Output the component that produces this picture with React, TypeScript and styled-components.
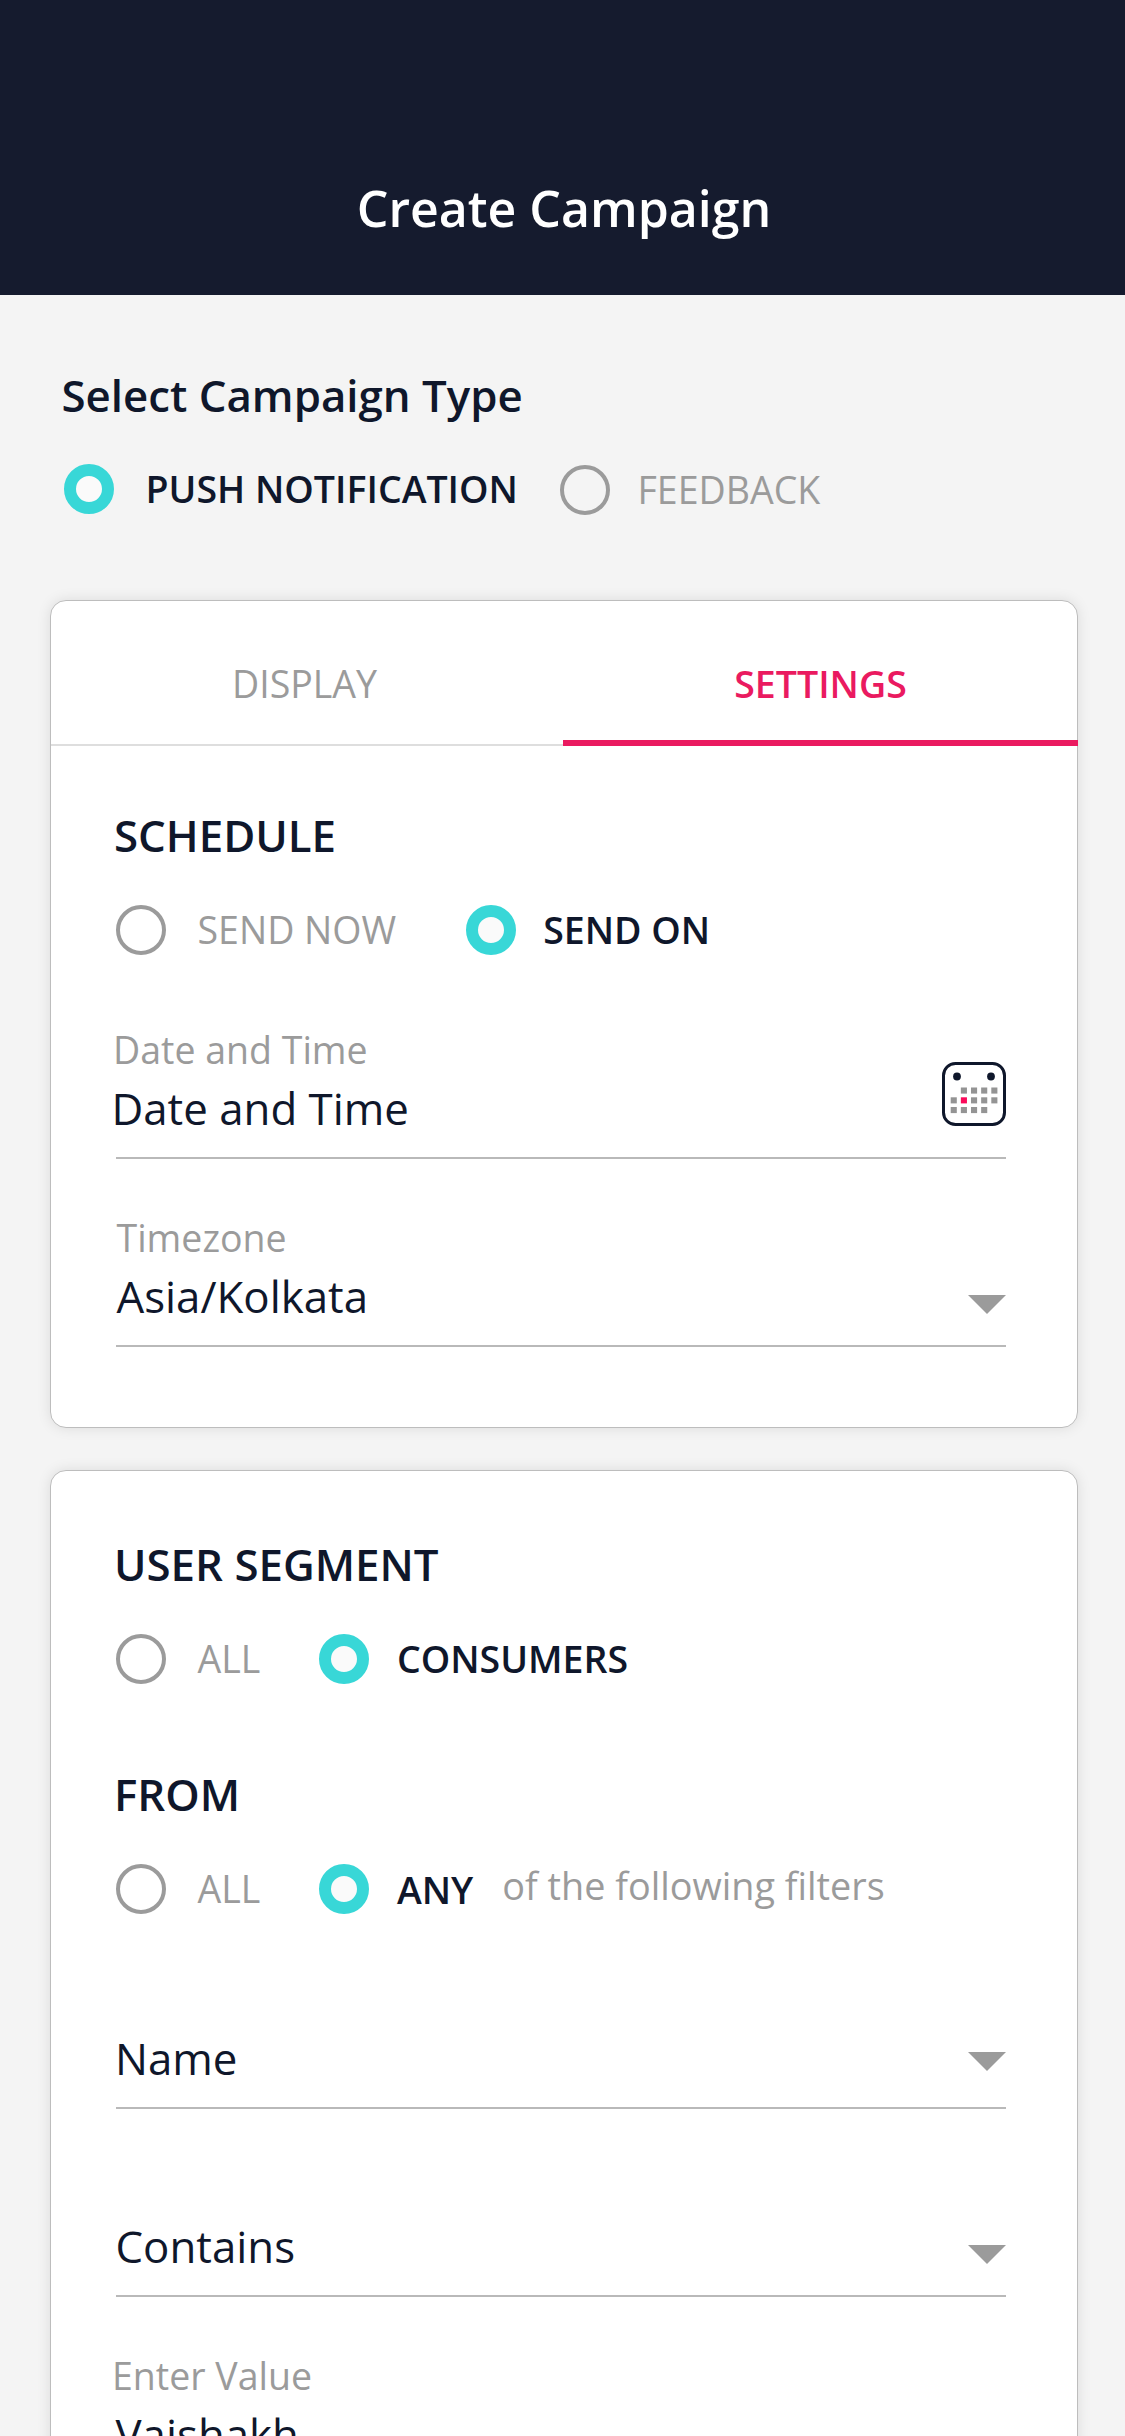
import React from 'react';
import styled, { createGlobalStyle } from 'styled-components';

const color = {
  navy: '#151b2e',
  ink: '#0f172b',
  muted: '#9b9b9b',
  teal: '#38d7d7',
  pink: '#ea1a60',
  page: '#f4f4f4',
  rule: '#b9b9b9',
};

const Global = createGlobalStyle`
  * { box-sizing: border-box; }
  body {
    margin: 0;
    background: ${color.page};
    color: ${color.ink};
    font-family: 'Open Sans', sans-serif;
  }
`;

const Screen = styled.div`
  width: 1125px;
  height: 2436px;
  overflow: hidden;
  background: ${color.page};
`;

const Header = styled.header`
  height: 295px;
  padding: 172px 0 0 3px;
  background: ${color.navy};
  color: #fff;
  text-align: center;
  font-size: 50px;
  line-height: 72px;
  font-weight: 600;
`;

const TypeSection = styled.section`
  padding: 70px 0 0 64px;
  height: 305px;
`;

const Title = styled.h2`
  margin: 0 0 40px -2px;
  font-size: 43.8px;
  line-height: 60px;
  font-weight: 600;
`;

const TypeTitle = styled(Title)`
  margin-bottom: 39px;
  margin-left: -2.5px;
`;

const OptionRow = styled.div<{ $gap: number }>`
  display: flex;
  align-items: center;
  height: 50px;
  column-gap: ${(p) => p.$gap}px;
`;

const OptionBox = styled.label<{ $gap: number; $drop?: number }>`
  display: flex;
  align-items: center;
  column-gap: ${(p) => p.$gap}px;
  padding-top: ${(p) => p.$drop ?? 0}px;
`;

const Ring = styled.span<{ $on?: boolean }>`
  flex: none;
  width: 50px;
  height: 50px;
  border-radius: 50%;
  border: ${(p) => (p.$on ? `12px solid ${color.teal}` : `4px solid ${color.muted}`)};
  background: ${(p) => (p.$on ? '#fafafa' : 'transparent')};
`;

const OptionText = styled.span<{ $on?: boolean; $drop?: number }>`
  font-size: 37.5px;
  line-height: 50px;
  font-weight: ${(p) => (p.$on ? 600 : 400)};
  color: ${(p) => (p.$on ? color.ink : color.muted)};
  padding-top: ${(p) => p.$drop ?? 0}px;
  white-space: nowrap;
`;

const Suffix = styled(OptionText)`
  margin-left: -30px;
  padding-bottom: 6px;
  font-size: 37.8px;
`;

const Cards = styled.main`
  display: flex;
  flex-direction: column;
  gap: 42px;
  padding: 0 47px 0 50px;
`;

const Card = styled.section`
  background: #fff;
  border: 1px solid #bdbdbd;
  border-radius: 16px;
  box-shadow: 0 0 14px rgba(0, 0, 0, 0.1);
`;

const Tabs = styled.nav`
  display: grid;
  grid-template-columns: 512px 515px;
  height: 145px;
  margin-right: -1px;
`;

const Tab = styled.div<{ $active?: boolean }>`
  padding: 57px ${(p) => (p.$active ? 0 : 5)}px 0 0;
  border-bottom: ${(p) => (p.$active ? `6px solid ${color.pink}` : '2px solid #dedede')};
  color: ${(p) => (p.$active ? color.pink : color.muted)};
  font-size: 37.5px;
  line-height: 51px;
  font-weight: ${(p) => (p.$active ? 600 : 400)};
  text-align: center;
`;

const CardBody = styled.div<{ $top: number }>`
  padding: ${(p) => p.$top}px 71px 80px 65px;
`;

const Group = styled.div<{ $after: number }>`
  margin-bottom: ${(p) => p.$after}px;
`;

const Fields = styled.div`
  display: flex;
  flex-direction: column;
`;

const FieldBox = styled.div<{ $before: number }>`
  display: flex;
  justify-content: space-between;
  align-items: flex-start;
  margin-top: ${(p) => p.$before}px;
  padding-bottom: 19px;
  border-bottom: 2px solid ${color.rule};
`;

const FieldLabel = styled.div<{ $indent: number }>`
  margin: 1px 0 3px ${(p) => p.$indent}px;
  font-size: 37.5px;
  line-height: 51px;
  color: ${color.muted};
`;

const FieldValue = styled.div<{ $indent: number }>`
  margin-left: ${(p) => p.$indent}px;
  font-size: 43.8px;
  line-height: 60px;
`;

const Arrow = styled.span<{ $top: number }>`
  margin-top: ${(p) => p.$top}px;
  border: 19px solid transparent;
  border-top-color: ${color.muted};
  border-bottom-width: 0;
`;

const CalendarSvg = styled.svg`
  width: 64px;
  height: 64px;
  margin-top: 39px;
`;

function Calendar() {
  const rows = [
    { y: 25.5, cols: [1, 2, 3, 4] },
    { y: 35.3, cols: [0, 1, 2, 3, 4] },
    { y: 45, cols: [0, 1, 2, 3] },
  ];
  return (
    <CalendarSvg viewBox="0 0 64 64">
      <rect x="1.5" y="1.5" width="61" height="61" rx="12" fill="none" stroke={color.ink} strokeWidth="3" />
      <circle cx="15" cy="14.5" r="3.9" fill={color.ink} />
      <circle cx="49" cy="14.5" r="3.9" fill={color.ink} />
      {rows.map((row, r) =>
        row.cols.map((c) => (
          <rect
            key={`${r}-${c}`}
            x={8.7 + c * 10.15}
            y={row.y}
            width="6.1"
            height="6.1"
            fill={r === 1 && c === 1 ? '#fa0a5a' : '#949494'}
          />
        )),
      )}
    </CalendarSvg>
  );
}

type OptionProps = { text: string; on?: boolean; gap: number; drop?: number; textDrop?: number };

function Option({ text, on, gap, drop, textDrop }: OptionProps) {
  return (
    <OptionBox $gap={gap} $drop={drop}>
      <Ring $on={on} />
      <OptionText $on={on} $drop={textDrop}>{text}</OptionText>
    </OptionBox>
  );
}

type FieldProps = {
  label?: string;
  value: string;
  labelIndent?: number;
  indent: number;
  before?: number;
  children?: React.ReactNode;
};

function Field({ label, value, labelIndent = 0, indent, before = 0, children }: FieldProps) {
  return (
    <FieldBox $before={before}>
      <div>
        {label && <FieldLabel $indent={labelIndent}>{label}</FieldLabel>}
        <FieldValue $indent={indent}>{value}</FieldValue>
      </div>
      {children}
    </FieldBox>
  );
}

export default function App() {
  return (
    <Screen>
      <Global />
      <Header>Create Campaign</Header>
      <TypeSection>
        <TypeTitle>Select Campaign Type</TypeTitle>
        <OptionRow $gap={42}>
          <Option text="PUSH NOTIFICATION" on gap={31.5} />
          <Option text="FEEDBACK" gap={27.5} drop={2} />
        </OptionRow>
      </TypeSection>
      <Cards>
        <Card>
          <Tabs>
            <Tab>DISPLAY</Tab>
            <Tab $active>SETTINGS</Tab>
          </Tabs>
          <CardBody $top={59}>
            <Group $after={68}>
              <Title>SCHEDULE</Title>
              <OptionRow $gap={70}>
                <Option text="SEND NOW" gap={31.5} />
                <Option text="SEND ON" on gap={27} />
              </OptionRow>
            </Group>
            <Fields>
              <Field label="Date and Time" value="Date and Time" labelIndent={-3} indent={-4.5}>
                <Calendar />
              </Field>
              <Field label="Timezone" value="Asia/Kolkata" labelIndent={0.5} indent={0.5} before={52}>
                <Arrow $top={84} />
              </Field>
            </Fields>
          </CardBody>
        </Card>
        <Card>
          <CardBody $top={63}>
            <Group $after={80}>
              <Title>USER SEGMENT</Title>
              <OptionRow $gap={59}>
                <Option text="ALL" gap={31.5} />
                <Option text="CONSUMERS" on gap={27.5} />
              </OptionRow>
            </Group>
            <Group $after={114}>
              <Title>FROM</Title>
              <OptionRow $gap={59}>
                <Option text="ALL" gap={31.5} />
                <Option text="ANY" on gap={27.5} textDrop={2} />
                <Suffix>of the following filters</Suffix>
              </OptionRow>
            </Group>
            <Fields>
              <Field value="Name" indent={-1}>
                <Arrow $top={24} />
              </Field>
              <Field value="Contains" indent={-0.5} before={107}>
                <Arrow $top={29} />
              </Field>
              <Field label="Enter Value" value="Vaishakh" labelIndent={-4} indent={-0.5} before={52} />
            </Fields>
          </CardBody>
        </Card>
      </Cards>
    </Screen>
  );
}
